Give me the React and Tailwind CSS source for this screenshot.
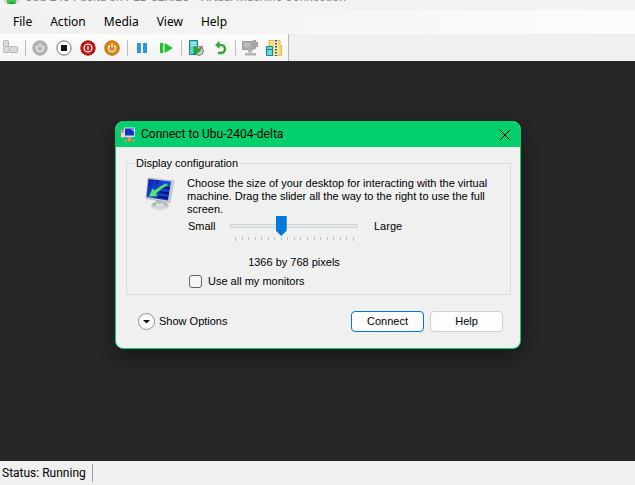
import { useState } from 'react'
import { X } from 'lucide-react'

const MENUS = ['File', 'Action', 'Media', 'View', 'Help']

const menuFont = "font-['Noto_Sans','Open_Sans',sans-serif]"
const titleFont = "font-[Roboto,'Noto_Sans',sans-serif]"
const dialogFont = "font-['Liberation_Sans',Arial,sans-serif]"

function CtrlAltDelIcon() {
  return (
    <svg viewBox="0 0 16 16" className="w-4 h-4" fill="#dadada" stroke="#b4b4b4">
      <rect x="1.5" y=".5" width="5" height="6" rx="1" />
      <rect x="1.5" y="6.5" width="6" height="6" rx="1" />
      <rect x="7.5" y="6.5" width="8" height="6" rx="1" />
    </svg>
  )
}

function PowerIcon({ fill, edge, glyph }) {
  return (
    <svg viewBox="0 0 16 16" className="w-4 h-4" fill="none">
      <circle cx="8" cy="8" r="7.2" fill={fill} stroke={edge} />
      <path d="M5.8 5.4a3.5 3.5 0 1 0 4.4 0M8 3.6v4" stroke={glyph} strokeWidth="1.3" />
    </svg>
  )
}

function TurnOffIcon() {
  return (
    <svg viewBox="0 0 16 16" className="w-4 h-4">
      <circle cx="8" cy="8" r="7.2" fill="#fff" stroke="#777" />
      <rect x="5" y="5" width="6" height="6" fill="#151515" />
    </svg>
  )
}

function ShutDownIcon() {
  return (
    <svg viewBox="0 0 16 16" className="w-4 h-4" fill="none">
      <circle cx="8" cy="8" r="7.2" fill="#d40d0d" stroke="#9c1010" />
      <circle cx="8" cy="8" r="3.9" stroke="#fff" strokeWidth="1.3" />
      <path d="M8 5.9v4.2" stroke="#fff" strokeWidth="1.4" />
    </svg>
  )
}

function PauseIcon() {
  return (
    <svg viewBox="0 0 16 16" className="w-4 h-4" fill="#3294e8">
      <rect x="3" y="3" width="4" height="10" />
      <rect x="9" y="3" width="4" height="10" />
    </svg>
  )
}

function ResetIcon() {
  return (
    <svg viewBox="0 0 16 16" className="w-4 h-4" fill="#18c52c">
      <rect x="2" y="3" width="3" height="10" />
      <path d="M6.5 3v10L15 8z" />
    </svg>
  )
}

function CheckpointIcon() {
  return (
    <svg viewBox="0 0 16 16" className="w-4 h-4">
      <path d="M1.5 .5h8v14h-8z" fill="#5ccfd4" stroke="#1d8690" />
      <path d="M3 3h5M3 5.5h5" stroke="#e6ffff" />
      <circle cx="11" cy="11" r="4.3" fill="#c9c9c9" stroke="#777" />
      <path d="M11.500 9.500l3-3.500" stroke="#c04a3a" strokeWidth="1.5" />
      <path d="M6 6v9l6.500-4.500z" fill="#18b52c" stroke="#0a7d20" strokeWidth=".6" />
    </svg>
  )
}

function RevertIcon() {
  return (
    <svg viewBox="0 0 16 16" className="w-4 h-4" fill="none">
      <path d="M5 5h4a4 4 0 0 1 0 8H6" stroke="#2fa92f" strokeWidth="2.4" />
      <path d="M7.500 1L3 5l4.500 4z" fill="#2fa92f" />
    </svg>
  )
}

function EnhancedSessionIcon() {
  return (
    <svg viewBox="0 0 16 16" className="w-4 h-4">
      <path d="M.5 1.500h11v8H.5z" fill="#adadad" stroke="#9b9b9b" />
      <path d="M2 4h6M2 6h6" stroke="#c9c9c9" />
      <path d="M6 9.500h4v3H6zM3 13h11v2.500H3z" fill="#b5b5b5" />
      <path d="M11 0h3v2h2v5h-2v2h-3V7H9V2h2z" fill="#a4a4a4" />
    </svg>
  )
}

function ShareIcon() {
  return (
    <svg viewBox="0 0 16 16" className="w-4 h-4">
      <path d="M3 .5h11v5h1.500v10H6V7H3z" fill="#fbdf6b" stroke="#dfb73a" />
      <path d="M10 0v16" stroke="#e6e6e6" strokeWidth="3.5" />
      <path d="M10 0v16" stroke="#555" strokeWidth="2" strokeDasharray="1.5 1.5" />
      <path d="M.5 6.500h6v9h-6z" fill="#62d8e2" stroke="#168390" />
      <path d="M1 9.500h5" stroke="#168390" />
    </svg>
  )
}

function RemotePcIcon() {
  return (
    <svg viewBox="0 0 16 16" className="w-4 h-4">
      <path d="M.5 3h4v8h-4z" fill="#ddd" stroke="#888" />
      <path d="M1.500 5h2" stroke="#555" />
      <path d="M4 .5h11v9.500H4z" fill="#d9dde3" />
      <path d="M5 1.500h9v7H5z" fill="#1531b8" />
      <path d="M10 1.500h4v3.500z" fill="#7ca4f5" />
      <path d="M7.500 10h4v2h-4z" fill="#aaa" />
      <path d="M4 13.500h11" stroke="#aaa" strokeWidth="1.5" />
      <path d="M7 13.500h5" stroke="#b9641a" strokeWidth="2" />
      <circle cx="9.500" cy="13.300" r="1.5" fill="#e8a030" />
    </svg>
  )
}

function DisplayIcon() {
  return (
    <svg viewBox="0 0 30 34" className="w-[30px] h-[34px] shrink-0">
      <defs>
        <linearGradient id="screen" x1="0" y1="0" x2="1" y2="1">
          <stop offset="0" stopColor="#0a1d9c" />
          <stop offset=".5" stopColor="#1548e8" />
          <stop offset="1" stopColor="#0b2fc0" />
        </linearGradient>
        <linearGradient id="stand" x1="0" y1="0" x2="0" y2="1">
          <stop offset="0" stopColor="#909498" />
          <stop offset="1" stopColor="#eceeef" />
        </linearGradient>
      </defs>
      <ellipse cx="15" cy="28.5" rx="8.5" ry="4" fill="url(#stand)" stroke="#c4c6c8" strokeWidth=".7" />
      <path d="M11 22l9 2-1 5h-8z" fill="url(#stand)" />
      <path d="M3 1L27 3.500l2 .5-4 21.500-24-4z" fill="#c9cdd1" stroke="#aeb2b6" strokeWidth=".6" />
      <path d="M3.500 2L26 4.500l-3 19L1.500 20z" fill="url(#screen)" />
      <path d="M16 10.500l9 1M14 15l10 1.500M12 19.500l11 1.500" stroke="#071866" strokeWidth="2" />
      <path d="M13 3l-1 4" stroke="#071866" />
      <path d="M21 6.500C17 8.500 13 11 9.500 13.500L7.500 11.500 4 19.500l8.500-.5-1.500-2.500C14 13.500 18 10.500 23 8z" fill="#58e868" stroke="#28ad50" strokeWidth=".4" />
    </svg>
  )
}

function AppIcon() {
  return (
    <svg viewBox="0 0 16 16" className="w-4 h-4">
      <path d="M0 11h15v3H0z" fill="#d3d6d3" />
      <path d="M5 0h5v11h2v4H3v-4h2z" fill="#41ca4a" />
      <path d="M5 13h5v2H5z" fill="#2b9a35" />
    </svg>
  )
}

const TOOLS = [
  [{ label: 'Ctrl+Alt+Delete', icon: <CtrlAltDelIcon /> }],
  [
    { label: 'Start', icon: <PowerIcon fill="#b3b3b3" edge="#a8a8a8" glyph="#ededed" /> },
    { label: 'Turn off', icon: <TurnOffIcon /> },
    { label: 'Shut down', icon: <ShutDownIcon /> },
    { label: 'Save', icon: <PowerIcon fill="#e88508" edge="#a86612" glyph="#fff" /> },
  ],
  [
    { label: 'Pause', icon: <PauseIcon /> },
    { label: 'Reset', icon: <ResetIcon /> },
  ],
  [
    { label: 'Checkpoint', icon: <CheckpointIcon /> },
    { label: 'Revert', icon: <RevertIcon /> },
  ],
  [
    { label: 'Enhanced session', icon: <EnhancedSessionIcon /> },
    { label: 'Share', icon: <ShareIcon /> },
  ],
]

function ConnectDialog() {
  const [size, setSize] = useState(7)
  const [allMonitors, setAllMonitors] = useState(false)

  return (
    <div
      role="dialog"
      aria-labelledby="dialog-title"
      className={`${dialogFont} w-[406px] overflow-hidden rounded-lg border border-[#00cf6b] bg-[#f0f0f0] text-[11px] leading-[13px] text-black shadow-[0_8px_24px_rgba(0,0,0,0.45)]`}
    >
      <div className="flex h-[25px] items-center bg-[#00cf6b] pl-1 pr-[5px]">
        <RemotePcIcon />
        <h1 id="dialog-title" className={`${titleFont} ml-[5px] flex-1 text-[12px]`}>Connect to Ubu-2404-delta</h1>
        <button type="button" aria-label="Close">
          <X className="w-5 h-5" strokeWidth={1.2} />
        </button>
      </div>

      <div className="pt-[10px] pr-[9px] pb-4 pl-[10px]">
        <fieldset className="border border-[#dcdcdc] pl-[18px] pr-5 pb-[6px]">
          <legend className="-ml-[11px] px-[2px]">Display configuration</legend>
          <div className="flex gap-3 pt-[7px]">
            <DisplayIcon />
            <p>
              Choose the size of your desktop for interacting with the virtual machine. Drag the slider all the way to the right to use the full screen.
            </p>
          </div>

          <div className="ml-[43px] flex">
            <label htmlFor="size" className="w-[42px] pt-1">Small</label>
            <div className="w-[128px]">
              <input
                id="size"
                type="range"
                min="0"
                max="18"
                value={size}
                onChange={(e) => setSize(Number(e.target.value))}
                className="block h-5 w-full appearance-none bg-transparent [&::-webkit-slider-runnable-track]:h-[4px] [&::-webkit-slider-runnable-track]:border [&::-webkit-slider-runnable-track]:border-[#d3d6d6] [&::-webkit-slider-runnable-track]:bg-[#e5e9e9] [&::-webkit-slider-thumb]:-mt-[9px] [&::-webkit-slider-thumb]:h-5 [&::-webkit-slider-thumb]:w-[11px] [&::-webkit-slider-thumb]:appearance-none [&::-webkit-slider-thumb]:bg-[#0078d7] [&::-webkit-slider-thumb]:[clip-path:polygon(0_0,100%_0,100%_72%,50%_100%,0_72%)]"
              />
              <div className="flex justify-between pt-px pl-[5px] pr-1">
                {Array.from({ length: 19 }, (_, i) => (
                  <span key={i} className="h-[3px] w-px bg-[#bebebe] first:h-1 last:h-1" />
                ))}
              </div>
              <output htmlFor="size" className="mt-[15px] block text-center">1366 by 768 pixels</output>
            </div>
            <span className="ml-4 pt-1">Large</span>
          </div>

          <label className="ml-[44px] mt-[6px] flex items-center gap-[6px]">
            <input
              type="checkbox"
              checked={allMonitors}
              onChange={(e) => setAllMonitors(e.target.checked)}
              className="h-[13px] w-[13px] appearance-none rounded-[3px] border border-[#626262] bg-[#f6f6f6] checked:bg-[#0078d7]"
            />
            Use all my monitors
          </label>
        </fieldset>

        <div className="mt-4 flex items-center pl-3 pr-2">
          <button type="button" className="flex items-center gap-1">
            <svg viewBox="0 0 17 17" className="w-[17px] h-[17px]">
              <circle cx="8.5" cy="8.5" r="8" fill="#fdfdfd" stroke="#8f8f8f" />
              <path d="M5 7h7L8.500 10.500z" fill="#111" />
            </svg>
            Show Options
          </button>
          <div className="ml-auto flex gap-[6px]">
            <button type="button" className="h-[21px] w-[73px] rounded border border-[#0078d4] bg-[#fdfdfd]">Connect</button>
            <button type="button" className="h-[21px] w-[73px] rounded border border-[#d0d0d0] bg-[#fdfdfd]">Help</button>
          </div>
        </div>
      </div>
    </div>
  )
}

export default function App() {
  return (
    <div className={`${menuFont} flex h-screen flex-col overflow-hidden bg-[#f0f0f0] text-[12px] leading-4 text-black`}>
      <header className="flex h-[10px] shrink-0 items-end overflow-hidden bg-[#f3f3f3] pl-1 text-[#8a8a8a]">
        <div className="flex w-full items-center pb-[5px]">
          <AppIcon />
          <span className={`${titleFont} ml-[5px] whitespace-nowrap`}>Ubu-2404-delta on PLB-SERIES - Virtual Machine Connection</span>
        </div>
      </header>

      <nav className="flex h-6 shrink-0 items-center gap-[18px] bg-linear-to-r from-[#f0f0f0] to-[#fcfcfc] pl-[13px]">
        {MENUS.map((menu) => (
          <button key={menu} type="button">{menu}</button>
        ))}
      </nav>

      <div className="flex h-[27px] shrink-0 items-stretch">
        <div role="toolbar" className="flex items-center border-r border-[#b8b8b8] bg-linear-to-b from-[#fdfdfd] to-[#f3f3f3] pl-[2px] pr-[6px]">
          {TOOLS.map((group, i) => (
            <div key={i} className="flex items-center gap-2 border-[#bdbdbd] not-first:ml-[7px] not-first:border-l not-first:pl-[6px]">
              {group.map((tool) => (
                <button key={tool.label} type="button" aria-label={tool.label}>{tool.icon}</button>
              ))}
            </div>
          ))}
        </div>
      </div>

      <main className="flex flex-1 items-start justify-center bg-[#272727] pt-[60px] pl-px">
        <ConnectDialog />
      </main>

      <footer className="flex h-6 shrink-0 items-center pl-[2px]">
        <span className={`${titleFont} border-r border-[#a0a0a0] py-px pr-[6px]`}>Status: Running</span>
      </footer>
    </div>
  )
}
